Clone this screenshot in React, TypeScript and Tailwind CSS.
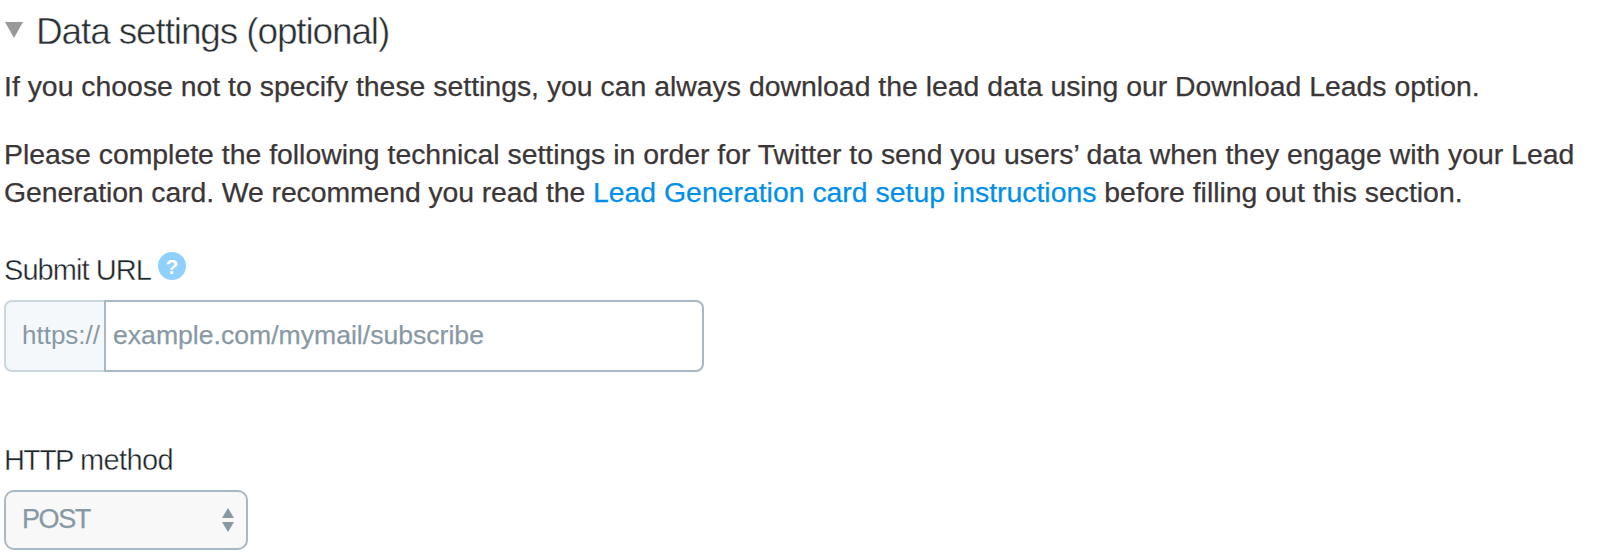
import React from 'react';

interface LabelProps {
  htmlFor: string;
  className?: string;
  children: React.ReactNode;
}

// The white stroke eats into the glyph edges and gives a light weight
const FieldLabel: React.FC<LabelProps> = ({ htmlFor, className = '', children }) => (
  <label
    htmlFor={htmlFor}
    className={`block whitespace-nowrap text-[29px] leading-[38px] text-[#1c2529] [-webkit-text-stroke:0.4px_white] ${className}`}
  >
    {children}
  </label>
);

const HelpBadge: React.FC = () => (
  <span className="mt-px ml-[7px] flex h-7 w-7 items-center justify-center rounded-full bg-[#8fd0ff] text-[21px] leading-none font-bold text-white">
    ?
  </span>
);

const SelectArrows: React.FC = () => (
  <svg width="12" height="24" viewBox="0 0 12 24" fill="#8899a6">
    <path d="M6 0L12 10H0Z" />
    <path d="M0 14H12L6 24Z" />
  </svg>
);

export default function App() {
  return (
    <main className="h-[558px] w-[1598px] overflow-hidden bg-white pt-[10px] pl-1 font-['Liberation_Sans',Arial,sans-serif] text-[#3b3637]">
      <header className="flex h-11 items-start">
        <svg className="mt-3 ml-px" width="18" height="16" viewBox="0 0 18 16" fill="#999999">
          <path d="M0 0H18L9 16Z" />
        </svg>
        <h1 className="ml-[13px] text-[37px] leading-[44px] tracking-[-1.14px] whitespace-nowrap text-[#292f33] [-webkit-text-stroke:0.5px_white]">
          Data settings (optional)
        </h1>
      </header>

      <div className="mt-[13px] text-[28.4px] leading-[38px] whitespace-nowrap [-webkit-text-stroke:0.25px_currentColor]">
        <p>
          If you choose not to specify these settings, you can always download the lead data using our Download Leads option.
        </p>
        <p className="mt-[30px]">
          <span className="block">
            Please complete the following technical settings in order for Twitter to send you users’ data when they engage with your Lead
          </span>
          <span className="block">
            <span className="tracking-[-0.09px]">Generation card. We recommend you read the{' '}</span>
            <a className="text-[#0090e9]">Lead Generation card setup instructions</a> before filling out this section.
          </span>
        </p>
      </div>

      <div className="mt-[40px] flex h-[38px] items-start">
        <FieldLabel htmlFor="submit-url" className="tracking-[-0.95px]">Submit URL</FieldLabel>
        <HelpBadge />
      </div>
      <div className="mt-[11px] flex h-[72px] w-[700px]">
        <span className="w-[100px] rounded-l-lg border-2 border-r-0 border-[#ccd6dd] bg-[#f5f8fa] pl-4 text-[26px] leading-[66px] text-[#8899a6]">
          https://
        </span>
        <input
          id="submit-url"
          placeholder="example.com/mymail/subscribe"
          className="w-[600px] rounded-r-lg border-2 border-[#aab8c2] bg-white pb-px pl-[7px] text-[26.6px] text-[#8899a6] [-webkit-text-stroke:0.25px_#8899a6] placeholder:text-[#8899a6]"
        />
      </div>

      <FieldLabel htmlFor="http-method" className="mt-[69px]">
        <span className="tracking-[-1.8px]">HTTP</span>
        <span className="tracking-[-0.6px]"> method</span>
      </FieldLabel>
      <button
        id="http-method"
        className="mt-[11px] flex h-[60px] w-[244px] items-center justify-between rounded-[10px] border-2 border-[#aab8c2] bg-[#f8f8f8] pr-3 pl-4 text-[27px] tracking-[-1.4px] text-[#8899a6]"
      >
        <span className="pb-px [-webkit-text-stroke:0.25px_currentColor]">POST</span>
        <SelectArrows />
      </button>
    </main>
  );
}
